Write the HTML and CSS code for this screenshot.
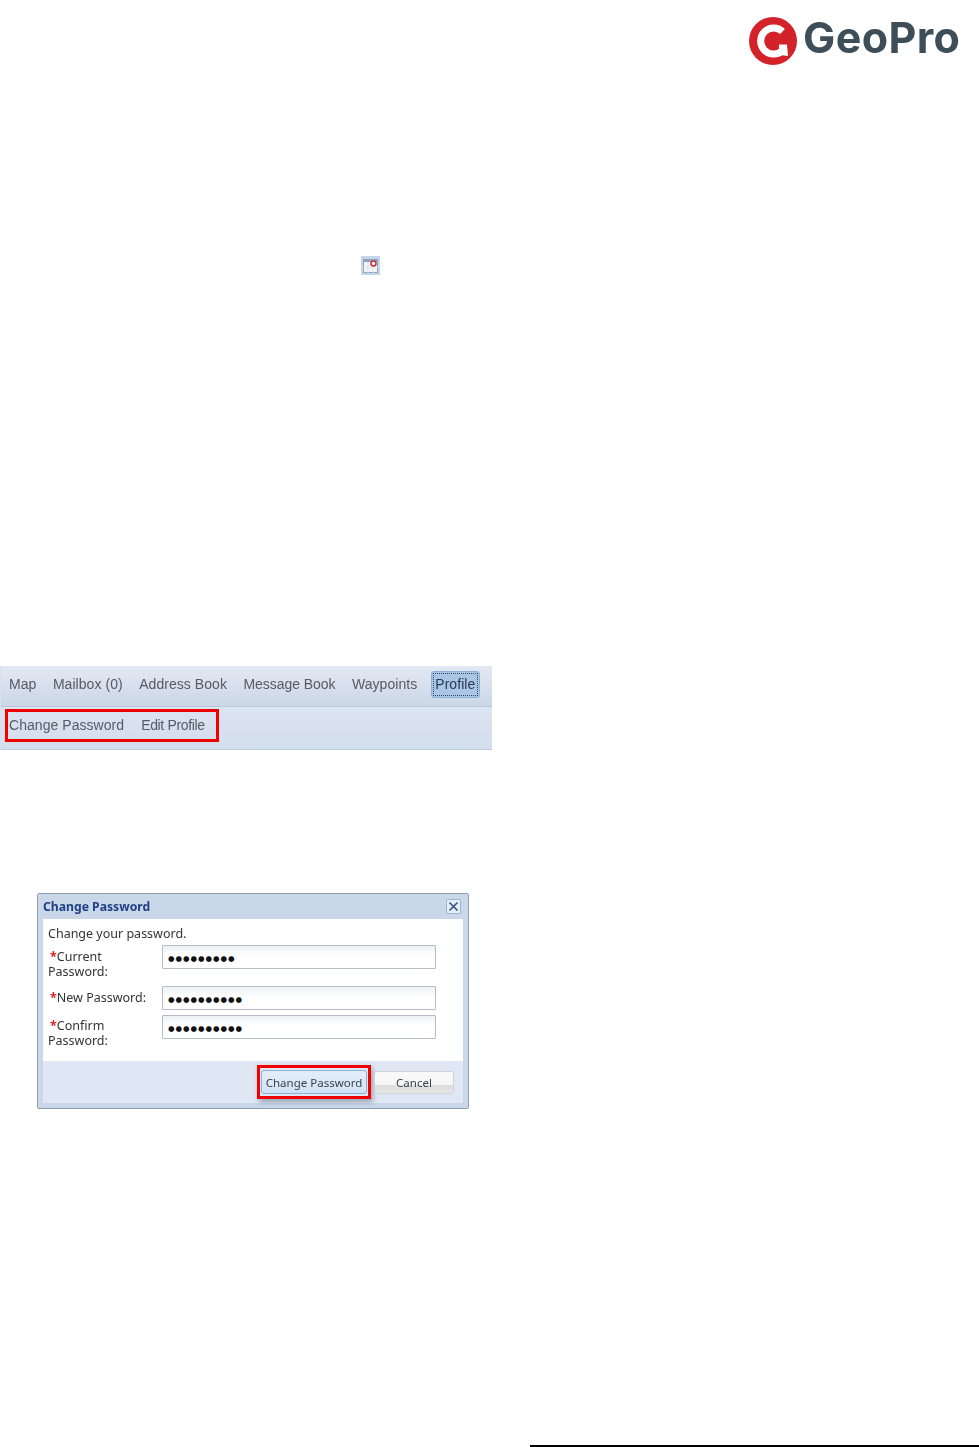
FILE: index.html
```html
<!DOCTYPE html>
<html lang="en">
<head>
<meta charset="utf-8">
<title>Change Password</title>
<link rel="stylesheet" href="styles.css">
</head>
<body>
<div class="page">
  <header class="brand">
    <svg class="brand-mark" viewBox="0 0 48 48" width="48" height="48" aria-hidden="true">
      <circle cx="24" cy="24" r="24" fill="#d4222a"/>
      <path d="M33.500 14.500A13 13 0 1 0 33 34" fill="none" stroke="#fff" stroke-width="7"/>
      <path d="M24 21.500h18v6H24z" fill="#d4222a"/>
      <path d="M30 27.500h8l1 11.500-12-1.500 3-3z" fill="#fff"/>
    </svg>
    <span class="brand-name">GeoPro</span>
  </header>

  <div class="tool-icon-row">
    <svg class="tool-icon" viewBox="0 0 19 19" width="19" height="19" aria-hidden="true">
      <rect width="19" height="19" fill="#c5d6ea"/>
      <rect x="2.500" y="3.500" width="14" height="13" fill="#f4f5f5" stroke="#8fa3bd"/>
      <rect x="2" y="3" width="15" height="3" fill="#8fa3bd"/>
      <path d="M7 6v11M12 6v11M2 11h15" stroke="#dfe3e8"/>
      <circle cx="12.500" cy="7.500" r="2.500" fill="#fff" stroke="#cf2a35" stroke-width="1.500"/>
    </svg>
  </div>

  <nav class="tabs">
    <div class="tabs-main">
      <a class="tab">Map</a>
      <a class="tab">Mailbox (0)</a>
      <a class="tab">Address Book</a>
      <a class="tab tab-narrow">Message Book</a>
      <a class="tab">Waypoints</a>
      <a class="tab tab-profile"><span class="tab-focus">Profile</span></a>
    </div>
    <div class="tabs-sub">
      <div class="highlight-group">
        <a class="tab">Change Password</a>
        <a class="tab tab-tight">Edit Profile</a>
      </div>
    </div>
  </nav>

  <section class="dialog">
    <div class="dialog-title">
      <h2>Change Password</h2>
      <button class="dialog-close" type="button" aria-label="Close">
        <svg viewBox="0 0 11 11" width="11" height="11" aria-hidden="true"><path d="M1.500 1.500l8 8M9.500 1.500l-8 8" stroke="#2f4f86" stroke-width="1.600" fill="none"/></svg>
      </button>
    </div>
    <div class="dialog-body">
      <p class="intro">Change your password.</p>
      <div class="form-grid">
        <div class="field-label"><span class="req">*</span><span>Current</span><br><span>Password:</span></div>
        <div class="pw">●●●●●●●●●</div>
        <div class="field-label"><span class="req">*</span><span>New Password:</span></div>
        <div class="pw">●●●●●●●●●●</div>
        <div class="field-label field-label-up"><span class="req">*</span><span>Confirm</span><br><span>Password:</span></div>
        <div class="pw">●●●●●●●●●●</div>
      </div>
    </div>
    <div class="dialog-footer">
      <div class="highlight-btn"><button class="btn btn-primary" type="button">Change Password</button></div>
      <button class="btn btn-cancel" type="button">Cancel</button>
    </div>
  </section>

  <div class="foot-rule"></div>
</div>
</body>
</html>
```
FILE: styles.css
```css
* { box-sizing: border-box; }
html, body { margin: 0; padding: 0; background: #fff; }
body { width: 979px; height: 1447px; overflow: hidden; font-family: "Liberation Sans", Arial, sans-serif; }
.page { display: flex; flex-direction: column; height: 1447px; }

.brand { display: flex; align-items: center; gap: 6px; height: 49px; margin-top: 16px; padding-left: 749px; }
.brand-mark { flex: none; filter: blur(0.3px); }
.brand-name { padding-bottom: 7px; font-family: "Inter", sans-serif; font-weight: 700; font-size: 43px; letter-spacing: 0.4px; line-height: 42px; color: #3d4e59; filter: blur(0.4px); }

.tool-icon-row { display: flex; padding-left: 361px; margin-top: 191px; }
.tool-icon { display: block; filter: blur(0.3px); }

.tabs { width: 492px; margin-top: 391px; border-left: 1px solid #d8e0ec; }
.tabs-main { display: flex; align-items: center; gap: 16.500px; height: 41px; padding: 0 0 4px 8px; background: linear-gradient(#e3e9f3, #d2dcea 70%, #cbd7e7); border-bottom: 1px solid #b9c8dc; }
.tab { font-size: 14px; letter-spacing: 0.05px; color: #565b63; white-space: nowrap; filter: blur(0.35px); }
.tab-narrow { letter-spacing: -0.05px; }
.tab-tight { letter-spacing: -0.35px; }
.tab-profile { margin-left: -2.500px; padding: 1px; width: 49px; height: 27px; border: 1px solid #8fb0d2; border-radius: 3px; background: #a9c6e6; color: #2c3a50; }
.tab-focus { display: block; height: 23px; line-height: 21px; padding-left: 1px; border: 1px dotted #33475f; }
.tabs-sub { display: flex; align-items: center; height: 43px; padding-left: 4px; background: linear-gradient(#dbe4f1, #d3deec); border-bottom: 1px solid #bccce0; }
.highlight-group { display: flex; align-items: center; gap: 17px; width: 214px; height: 33px; margin-top: -5px; padding: 0 0 2px 1px; border: 3px solid #f10000; }

.dialog { display: flex; flex-direction: column; width: 432px; height: 216px; margin: 143px 0 0 37px; border: 1px solid #8f9fb2; border-radius: 2px; background: #cad7e8; padding: 0 5px 5px; }
.dialog-title { display: flex; align-items: center; justify-content: space-between; height: 25px; margin: 0 -5px; padding: 0 7px 0 5px; background: #cad7e8; }
.dialog-title h2 { margin: 0; font-family: "Noto Sans", sans-serif; font-size: 12.200px; font-weight: 700; color: #1f3f86; filter: blur(0.25px); }
.dialog-close { display: flex; align-items: center; justify-content: center; width: 15px; height: 15px; padding: 0; border: 1px solid #9db5d2; border-radius: 2px; background: #e6eef8; }
.dialog-body { height: 142px; padding: 7px 5px 0; background: #fff; }
.intro { margin: 0; height: 19px; font-family: "Noto Sans", sans-serif; font-size: 12.500px; line-height: 16px; color: #333; filter: blur(0.3px); }
.form-grid { display: grid; grid-template-columns: 114px 274px; grid-template-rows: 41px 29px auto; }
.field-label { padding-top: 4px; font-family: "Noto Sans", sans-serif; font-size: 12.500px; line-height: 15px; color: #333; white-space: nowrap; filter: blur(0.3px); }
.field-label-up { padding-top: 3px; }
.req { margin-left: 2px; color: #e02020; font-weight: 700; }
.pw { width: 274px; height: 24px; padding-left: 5px; border: 1px solid #b5bcc6; border-radius: 1px; background: linear-gradient(#eef0f2, #fff 45%); font-family: "DejaVu Sans", sans-serif; font-size: 7.500px; line-height: 25px; letter-spacing: 0.95px; color: #111; white-space: nowrap; }

.dialog-footer { display: flex; align-items: center; justify-content: flex-end; flex: 1; padding: 0 9px 0 0; gap: 3px; background: #dfe7f4; }
.highlight-btn { display: flex; align-items: center; justify-content: center; width: 114px; height: 34px; border: 3px solid #f10000; box-shadow: 2px 3px 5px rgba(70, 80, 100, .45); }
.btn { font-family: "Noto Sans", sans-serif; font-size: 11.500px; color: #3c4148; padding: 0; white-space: nowrap; cursor: pointer; }
.btn-primary { width: 106px; height: 24px; border: 1px solid #8db0d4; border-radius: 3px; background: linear-gradient(#e4eefa, #d1e2f5); filter: blur(0.2px); }
.btn-cancel { width: 80px; height: 23px; border: 1px solid #cfd4da; border-radius: 3px; background: linear-gradient(#fafafa 0, #f6f6f6 60%, #dcdcdc 62%, #e6e6e6); filter: blur(0.2px); }

.foot-rule { margin: auto 0 0 530px; width: 449px; height: 2px; background: #000; }
```
